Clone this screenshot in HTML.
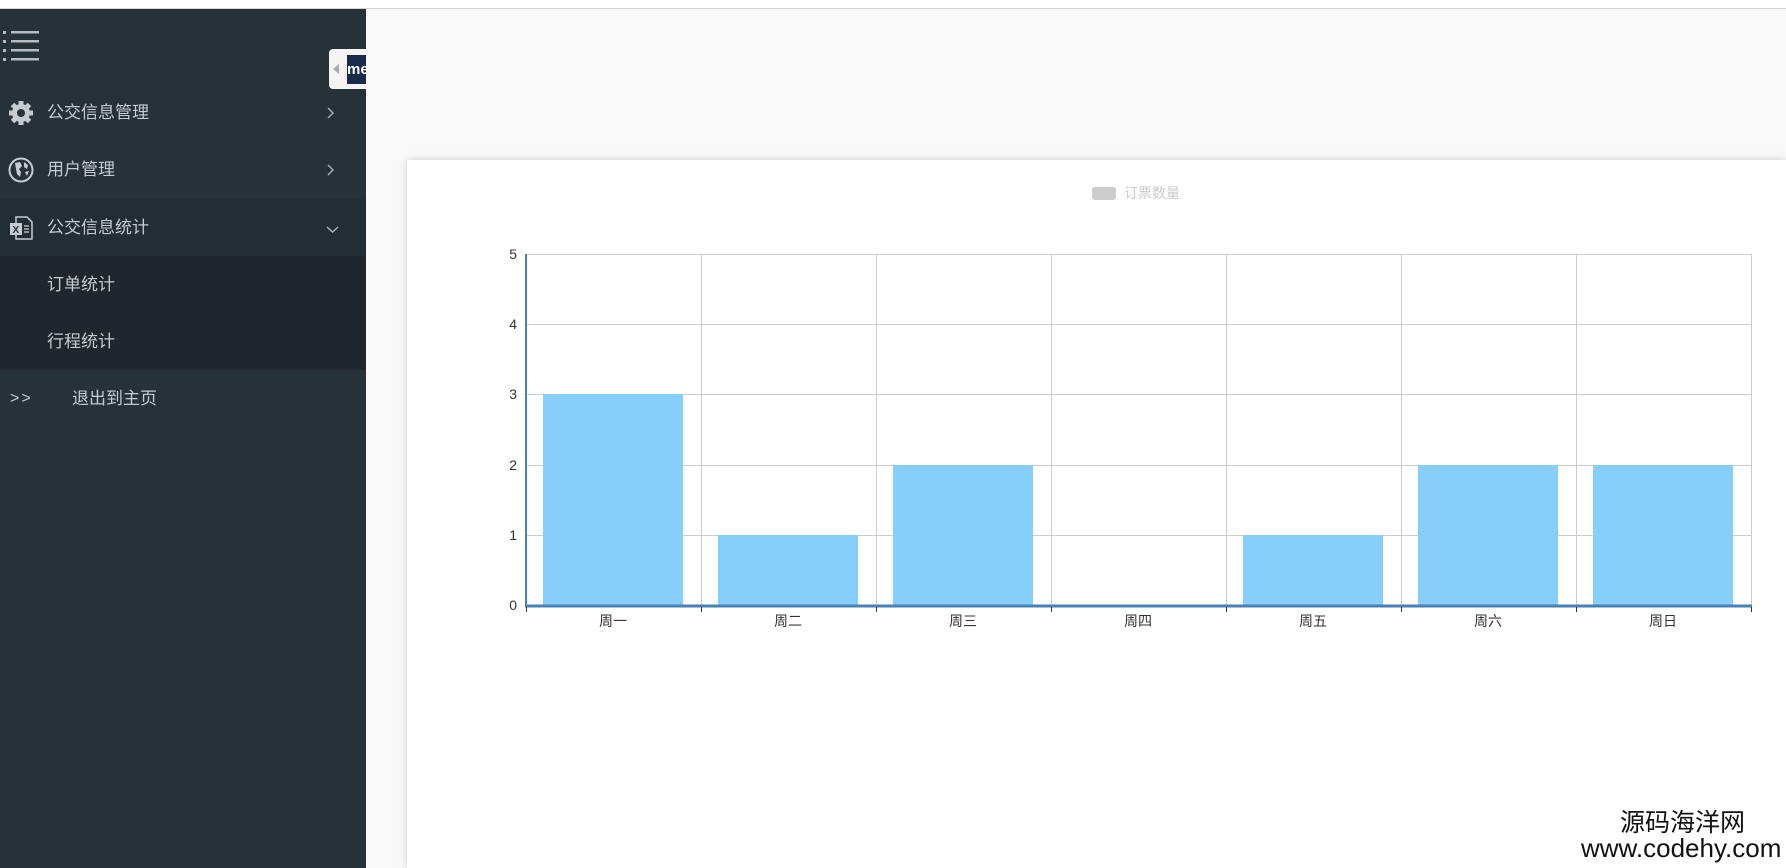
<!DOCTYPE html>
<html><head><meta charset="utf-8"><style>
*{margin:0;padding:0;box-sizing:border-box}
html,body{width:1786px;height:868px;overflow:hidden}
body{background:#f9f9f9;font-family:"Liberation Sans","Noto Sans CJK SC",sans-serif;position:relative}
.topline{position:absolute;left:0;top:0;width:1786px;height:9px;background:#fff;border-bottom:1px solid #d4d4d4}
.side{position:absolute;left:0;top:9px;width:366px;height:859px;background:#263238}
.item{position:absolute;left:0;width:366px;height:57px;color:#c5cbcf;font-size:17px;line-height:57px}
.item .t{position:absolute;left:47px}
.item svg.ch{position:absolute;left:326px;top:23px}
.card{position:absolute;left:407px;top:160px;width:1379px;height:708px;background:#fff;box-shadow:0 0 8px rgba(0,0,0,.18)}
.wm{position:absolute;color:#111;white-space:nowrap}
</style></head><body>
<div class="topline"></div>
<div class="side">
  <svg style="position:absolute;left:3px;top:20px" width="40" height="36">
    <g fill="#b6bcc0"><rect x="0" y="2" width="3" height="3"/><rect x="0" y="11" width="3" height="3"/><rect x="0" y="20" width="3" height="3"/><rect x="0" y="29" width="3" height="3"/>
    <rect x="8" y="2" width="28" height="2.5"/><rect x="8" y="11" width="28" height="2.5"/><rect x="8" y="20" width="28" height="2.5"/><rect x="8" y="29" width="28" height="2.5"/></g>
  </svg>
  <div style="position:absolute;left:329px;top:40px;width:37px;height:40px;background:#f4f4f4;border-radius:4px 0 0 4px">
    <div style="position:absolute;left:4px;top:15px;width:0;height:0;border-top:5px solid transparent;border-bottom:5px solid transparent;border-right:6px solid #aaa"></div>
    <div style="position:absolute;left:18px;top:6px;width:19px;height:29px;background:#1b2a4a;color:#fff;font-weight:bold;font-size:15px;line-height:29px;overflow:hidden">me</div>
  </div>
  <div class="item" style="top:75px">
    <svg style="position:absolute;left:8px;top:16px" width="26" height="26" viewBox="0 0 26 26"><g fill="#c5cbcf"><circle cx="13" cy="13" r="9"/><g stroke="#c5cbcf" stroke-width="5"><line x1="13" y1="1" x2="13" y2="25"/><line x1="1" y1="13" x2="25" y2="13"/><line x1="4.5" y1="4.5" x2="21.5" y2="21.5"/><line x1="21.5" y1="4.5" x2="4.5" y2="21.5"/></g></g><circle cx="13" cy="13" r="4" fill="#263238"/></svg>
    <span class="t">公交信息管理</span><svg class="ch" width="10" height="12"><path d="M2 1 L7 6 L2 11" fill="none" stroke="#aab2b8" stroke-width="1.4"/></svg></div>
  <div class="item" style="top:132px">
    <svg style="position:absolute;left:8px;top:16px" width="26" height="26" viewBox="0 0 26 26"><circle cx="13" cy="13" r="11.5" fill="none" stroke="#c5cbcf" stroke-width="2"/><path d="M7 6 L12 5 L14 9 L11 12 L13 15 L12 20 L9 17 L8 12 Z M16 5 L20 8 L19 12 L16 10 Z M17 15 L21 14 L19 19 Z" fill="#c5cbcf"/></svg>
    <span class="t">用户管理</span><svg class="ch" width="10" height="12"><path d="M2 1 L7 6 L2 11" fill="none" stroke="#aab2b8" stroke-width="1.4"/></svg></div>
  <div class="item" style="top:190px;background:#232e34">
    <svg style="position:absolute;left:8px;top:16px" width="26" height="26" viewBox="0 0 26 26"><path d="M8 2 H19 L24 7 V24 H8 Z" fill="none" stroke="#c5cbcf" stroke-width="1.5"/><rect x="2" y="8" width="12" height="12" fill="#c5cbcf"/><text x="4.5" y="18" font-size="10" font-weight="bold" fill="#263238" font-family="Liberation Sans">X</text><g stroke="#c5cbcf" stroke-width="1.3"><line x1="16" y1="11" x2="21" y2="11"/><line x1="16" y1="14" x2="21" y2="14"/><line x1="16" y1="17" x2="21" y2="17"/></g></svg>
    <span class="t">公交信息统计</span><svg class="ch" style="top:26px" width="14" height="9"><path d="M1 2 L6.5 7 L12 2" fill="none" stroke="#aab2b8" stroke-width="1.4"/></svg></div>
  <div style="position:absolute;left:0;top:247px;width:366px;height:114px;background:#1f272c"></div>
  <div class="item" style="top:247px"><span class="t">订单统计</span></div>
  <div class="item" style="top:304px"><span class="t">行程统计</span></div>
  <div class="item" style="top:361px"><span style="position:absolute;left:10px;font-size:16px;letter-spacing:2px">&gt;&gt;</span><span class="t" style="left:72px">退出到主页</span></div>
</div>
<div class="card"></div>
<svg style="position:absolute;left:0;top:0" width="1786" height="868" font-family="Liberation Sans,Noto Sans CJK SC,sans-serif">
  <rect x="1092" y="187" width="24" height="13" rx="3" fill="#ccc"/>
  <text x="1124" y="198" font-size="14" fill="#ccc">订票数量</text>
  <g stroke="#ccc" stroke-width="1">
    <line x1="526" y1="254.5" x2="1752" y2="254.5"/><line x1="526" y1="324.5" x2="1752" y2="324.5"/><line x1="526" y1="394.5" x2="1752" y2="394.5"/><line x1="526" y1="465.5" x2="1752" y2="465.5"/><line x1="526" y1="535.5" x2="1752" y2="535.5"/>
    <line x1="701.5" y1="254" x2="701.5" y2="605"/><line x1="876.5" y1="254" x2="876.5" y2="605"/><line x1="1051.5" y1="254" x2="1051.5" y2="605"/><line x1="1226.5" y1="254" x2="1226.5" y2="605"/><line x1="1401.5" y1="254" x2="1401.5" y2="605"/><line x1="1576.5" y1="254" x2="1576.5" y2="605"/><line x1="1751.5" y1="254" x2="1751.5" y2="605"/>
  </g>
  <g fill="#87cefa">
    <rect x="543" y="394" width="140" height="211"/>
    <rect x="718" y="535" width="140" height="70"/>
    <rect x="893" y="465" width="140" height="140"/>
    <rect x="1243" y="535" width="140" height="70"/>
    <rect x="1418" y="465" width="140" height="140"/>
    <rect x="1593" y="465" width="140" height="140"/>
  </g>
  <line x1="526" y1="254" x2="526" y2="607" stroke="#4682b4" stroke-width="2"/>
  <line x1="525" y1="606" x2="1752" y2="606" stroke="#4682b4" stroke-width="3"/>
  <g stroke="#333" stroke-width="1"><line x1="526.5" y1="607" x2="526.5" y2="612"/><line x1="701.5" y1="607" x2="701.5" y2="612"/><line x1="876.5" y1="607" x2="876.5" y2="612"/><line x1="1051.5" y1="607" x2="1051.5" y2="612"/><line x1="1226.5" y1="607" x2="1226.5" y2="612"/><line x1="1401.5" y1="607" x2="1401.5" y2="612"/><line x1="1576.5" y1="607" x2="1576.5" y2="612"/><line x1="1751.5" y1="607" x2="1751.5" y2="612"/></g>
  <g font-size="14" fill="#333" text-anchor="end">
    <text x="517" y="259">5</text><text x="517" y="329">4</text><text x="517" y="399">3</text><text x="517" y="470">2</text><text x="517" y="540">1</text><text x="517" y="610">0</text>
  </g>
  <g font-size="14" fill="#333" text-anchor="middle">
    <text x="613" y="626">周一</text><text x="788" y="626">周二</text><text x="963" y="626">周三</text><text x="1138" y="626">周四</text><text x="1313" y="626">周五</text><text x="1488" y="626">周六</text><text x="1663" y="626">周日</text>
  </g>
</svg>
<div class="wm" style="left:1620px;top:808px;font-size:25px;line-height:30px">源码海洋网</div>
<div class="wm" style="left:1581px;top:834px;font-size:26px;line-height:28px">www.codehy.com</div>
</body></html>
